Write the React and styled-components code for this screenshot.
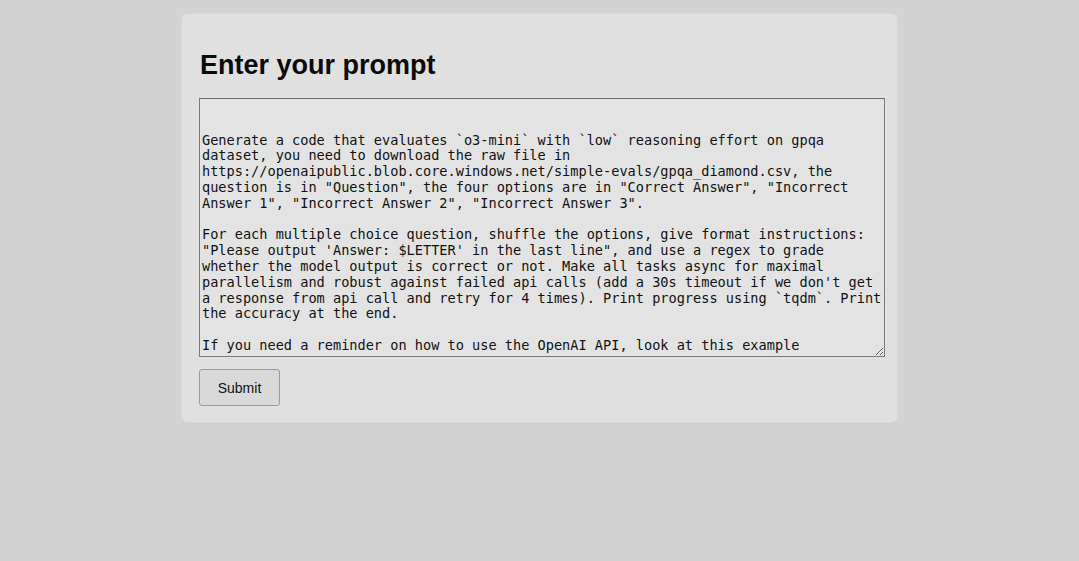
import React from "react";
import styled, { createGlobalStyle } from "styled-components";

const Global = createGlobalStyle`
  html, body { margin: 0; padding: 0; background: #d3d3d3; }
  body { font-family: "Liberation Sans", Arial, sans-serif; }
`;

const Page = styled.div`
  display: flex;
  justify-content: center;
  align-items: flex-start;
  padding-top: 14px;
  min-height: 561px;
  box-sizing: border-box;
`;

const Card = styled.div`
  width: 715px;
  box-sizing: border-box;
  background: #e0e0e0;
  border-radius: 6px;
  box-shadow: 0 0 0 1px #d8d8d8, 0 1px 3px rgba(0,0,0,0.06);
  padding: 36px 12px 16px 17px;
  display: flex;
  flex-direction: column;
  align-items: flex-start;
`;

const Title = styled.h1`
  margin: 0 0 17px 1px;
  font-family: "Liberation Sans", Arial, sans-serif;
  font-weight: 700;
  font-size: 27px;
  line-height: 31px;
  color: #0a0a0a;
`;

const Prompt = styled.textarea`
  width: 686px;
  height: 259px;
  box-sizing: border-box;
  margin: 0;
  padding: 2px 0 2px 2px;
  border: 1px solid #7a7a7a;
  border-top-color: #6a6a6a;
  background: #e3e3e3;
  color: #111;
  font-family: "DejaVu Sans Mono", monospace;
  font-size: 13.6px;
  line-height: 15.8px;
  resize: vertical;
  overflow: hidden;
  scrollbar-width: none;
  outline: none;
`;

const Button = styled.button`
  margin-top: 12px;
  width: 81px;
  height: 37px;
  box-sizing: border-box;
  border: 1px solid #9a9a9a;
  border-radius: 3px;
  background: #d9d9d9;
  color: #111;
  font-family: "Liberation Sans", Arial, sans-serif;
  font-size: 14px;
  padding: 0;
  cursor: pointer;
`;

const text = `

Generate a code that evaluates \`o3-mini\` with \`low\` reasoning effort on gpqa dataset, you need to download the raw file in https://openaipublic.blob.core.windows.net/simple-evals/gpqa_diamond.csv, the question is in "Question", the four options are in "Correct Answer", "Incorrect Answer 1", "Incorrect Answer 2", "Incorrect Answer 3".

For each multiple choice question, shuffle the options, give format instructions: "Please output 'Answer: $LETTER' in the last line", and use a regex to grade whether the model output is correct or not. Make all tasks async for maximal parallelism and robust against failed api calls (add a 30s timeout if we don't get a response from api call and retry for 4 times). Print progress using \`tqdm\`. Print the accuracy at the end.

If you need a reminder on how to use the OpenAI API, look at this example
`;

export default function App() {
  return (
    <>
      <Global />
      <Page>
        <Card>
          <Title>Enter your prompt</Title>
          <Prompt defaultValue={text} spellCheck={false} />
          <Button type="button">Submit</Button>
        </Card>
      </Page>
    </>
  );
}
